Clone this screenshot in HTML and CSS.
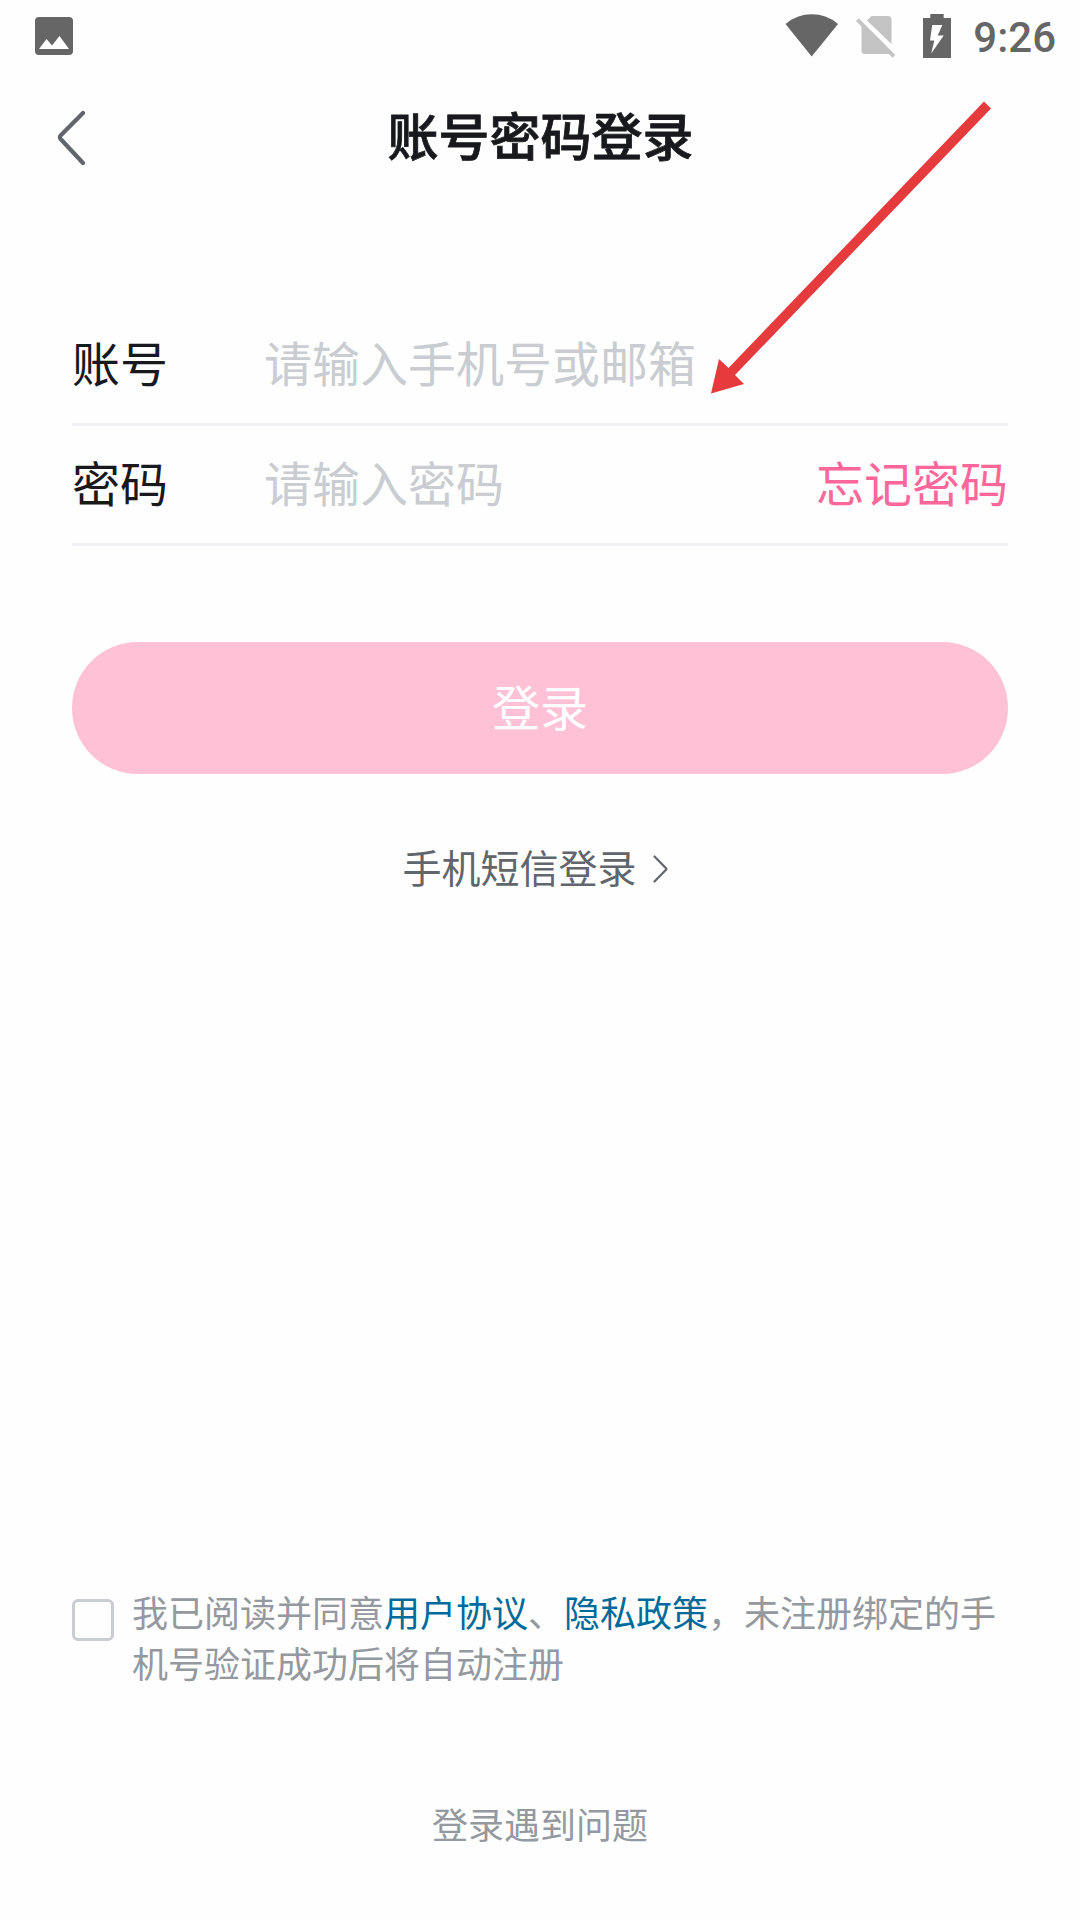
FILE: index.html
```html
<!DOCTYPE html>
<html lang="zh-CN">
<head>
    <meta charset="UTF-8">
    <meta name="viewport" content="width=device-width, initial-scale=1.0">
    <title>账号密码登录</title>
    <link rel="stylesheet" href="styles.css">
</head>
<body>
    <div class="screen">
        <div class="status-bar">
            <svg class="icon-image" width="38" height="38" viewBox="0 0 38 38">
                <rect width="38" height="38" rx="4" fill="#666"/>
                <path d="M4 32L11.5 22L17 28.5L24.5 19L34 32Z" fill="#fff"/>
            </svg>
            <div class="status-right">
                <svg class="icon-wifi" width="54" height="43" viewBox="0 0 54 43">
                    <path d="M0.5 10Q12 0.3 26.7 0.3Q42 0.3 53 10L26.7 42.5Z" fill="#666"/>
                </svg>
                <svg class="icon-sim" width="40" height="42" viewBox="0 0 40 42">
                    <path d="M15.5 0H32Q35.5 0 35.5 3.5V28L11 4.5Z" fill="#c3c3c3"/>
                    <path d="M5.5 9.5L33.5 37.5Q33 38 31.5 38H9Q5.5 38 5.5 34.5Z" fill="#c3c3c3"/>
                    <path d="M1.3 3.7L38 40.4" stroke="#c3c3c3" stroke-width="3.8"/>
                </svg>
                <svg class="icon-battery" width="28" height="44" viewBox="0 0 28 44">
                    <path d="M7.3 0H20.7V4H28V44H0V4H7.3Z" fill="#666"/>
                    <path d="M9.2 11H19.4L14.7 21.5H20.7L8.2 39.5L11.3 26.5H7Z" fill="#fff"/>
                </svg>
                <span class="time">9:26</span>
            </div>
        </div>

        <div class="header">
            <svg class="icon-back" width="30" height="56" viewBox="0 0 30 56">
                <path d="M26 3L3.6 25.4Q2.2 27.4 3.6 29L26 53" fill="none" stroke="#61666d" stroke-width="4.2" stroke-linecap="round" stroke-linejoin="round"/>
            </svg>
            <h1>账号密码登录</h1>
        </div>

        <form class="login-form">
            <div class="field">
                <label for="account">账号</label>
                <input type="text" id="account" placeholder="请输入手机号或邮箱">
            </div>
            <div class="field">
                <label for="password">密码</label>
                <input type="password" id="password" placeholder="请输入密码">
                <a class="forgot">忘记密码</a>
            </div>
            <button type="button" class="login-button">登录</button>
        </form>

        <a class="sms-login">
            <span>手机短信登录</span>
            <svg width="16" height="28" viewBox="0 0 16 28">
                <path d="M1.5 1.5L13 13.2Q13.8 14 13 14.8L1.5 26.5" fill="none" stroke="#61666d" stroke-width="2.2" stroke-linecap="round"/>
            </svg>
        </a>

        <div class="footer">
            <div class="terms">
                <span class="checkbox"></span>
                <p>我已阅读并同意<a>用户协议</a>、<a>隐私政策</a>，未注册绑定的手机号验证成功后将自动注册</p>
            </div>
            <a class="help">登录遇到问题</a>
        </div>

        <!-- pointer to the account field -->
        <svg class="pointer" width="284" height="296" viewBox="0 0 284 296">
            <path d="M273 0.5L280 7.5L24 274L33 283L0 292.5L8 258L17.5 267Z" fill="#e53b3c"/>
        </svg>
    </div>
</body>
</html>
```
FILE: styles.css
```css
* {
    box-sizing: border-box;
}
body {
    margin: 0;
    background-color: #fefefe;
    font-family: "Noto Sans CJK SC", sans-serif;
    color: #18191c;
}
svg {
    display: block;
    flex: none;
}
.screen {
    position: relative;
    display: flex;
    flex-direction: column;
    width: 1080px;
    height: 1920px;
}
.status-bar {
    display: flex;
    justify-content: space-between;
    align-items: flex-start;
    height: 72px;
    padding: 14px 24px 0 35px;
}
.icon-image {
    margin-top: 3px;
}
.status-right {
    display: flex;
}
.icon-sim {
    margin: 2px 0 0 17px;
}
.icon-battery {
    margin-left: 27px;
}
.time {
    margin-left: 22px;
    font-family: Roboto, sans-serif;
    font-size: 42px;
    font-weight: 500;
    line-height: 48px;
    color: #666;
}
.header {
    display: grid;
    grid-template-columns: 66px 1fr 66px;
    align-items: center;
    height: 132px;
    padding: 0 56px;
}
.icon-back {
    margin-left: 1px;
}
.header h1 {
    margin: 0 0 9px 1px;
    font-size: 51px;
    font-weight: 500;
    line-height: 60px;
    text-align: center;
    -webkit-text-stroke: 0.8px #18191c;
}
.login-form {
    padding: 102px 72px 0;
}
.field {
    display: flex;
    align-items: center;
    height: 120px;
    padding-bottom: 7px;
    border-bottom: 3px solid #f1f2f3;
    font-size: 48px;
    line-height: 70px;
}
.field label {
    width: 192px;
}
.field input {
    flex: 1;
    min-width: 0;
    height: 70px;
    padding: 0;
    border: none;
    outline: none;
    background: none;
    font: inherit;
    color: inherit;
}
.field input::placeholder {
    color: #c9ccd0;
    opacity: 1;
}
.forgot {
    color: #ff6699;
}
.login-button {
    display: block;
    width: 100%;
    height: 132px;
    margin-top: 96px;
    padding: 0 0 6px;
    border: none;
    border-radius: 66px;
    background-color: #ffc1d6;
    font-family: inherit;
    font-size: 48px;
    color: #fff;
}
.sms-login {
    display: flex;
    justify-content: center;
    align-items: center;
    gap: 16px;
    margin: 62px 0 0 -9px;
    font-size: 39px;
    line-height: 60px;
    color: #61666d;
}
.sms-login svg {
    margin-top: 5px;
}
.footer {
    display: flex;
    flex-direction: column;
    align-items: center;
    margin-top: auto;
    padding: 0 72px 71px;
    font-size: 36px;
    line-height: 51px;
    color: #9499a0;
}
.terms {
    display: flex;
    gap: 18px;
    width: 100%;
}
.terms p {
    flex: 1;
    margin: 1px 0 0;
}
.terms a {
    color: #006a9a;
}
.checkbox {
    width: 42px;
    height: 42px;
    margin-top: 14px;
    border: 3px solid #c9ccd0;
    border-radius: 6px;
}
.help {
    margin-top: 110px;
}
.pointer {
    position: absolute;
    left: 711px;
    top: 101px;
}
```
